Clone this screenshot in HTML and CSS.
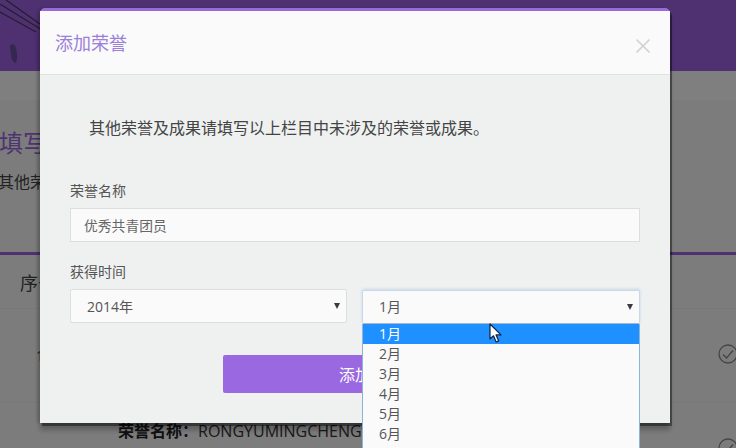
FILE: index.html
```html
<!DOCTYPE html>
<html lang="zh-CN">
<head>
<meta charset="utf-8">
<title>添加荣誉</title>
<link rel="stylesheet" href="styles.css">
</head>
<body>
<div class="page">
  <header class="banner">
    <svg class="banner-art" width="120" height="71" viewBox="0 0 120 71">
      <path d="M0 4L42 30M0 12L36 32M6 0L40 24" stroke="#4a3a5c" stroke-width="1.300" fill="none"/>
      <path d="M10 46c2-3 5-2 6 2s2 10 0 15c-3 0-5-5-5-8z" fill="#6d4ea0"/>
    </svg>
  </header>
  <section class="topband"></section>
  <section class="intro">
    <h2 class="intro-title">填写其他荣誉</h2>
    <p class="intro-text">其他荣誉及成果</p>
  </section>
  <section class="list">
    <div class="list-head">序号</div>
    <div class="row">
      <span class="row-num">1</span>
      <span class="row-text"><b>荣誉名称：</b>RONGYUMINGCHENG</span>
      <svg class="check" width="20" height="20" viewBox="0 0 20 20"><circle cx="10" cy="10" r="9" fill="none" stroke="#888" stroke-width="1.3"/><path d="M5 10.5l3.5 3.5L15 6.500" fill="none" stroke="#888" stroke-width="1.3"/></svg>
    </div>
    <div class="row">
      <span class="row-num row-num-link">2</span>
      <span class="row-text row-text-top"><b>荣誉名称：</b>RONGYUMINGCHENG</span>
      <svg class="check" width="20" height="20" viewBox="0 0 20 20"><circle cx="10" cy="10" r="9" fill="none" stroke="#888" stroke-width="1.3"/><path d="M5 10.5l3.5 3.5L15 6.500" fill="none" stroke="#888" stroke-width="1.3"/></svg>
    </div>
  </section>
</div>

<div class="backdrop"></div>

<div class="modal">
  <div class="modal-header">
    <h3 class="modal-title">添加荣誉</h3>
    <svg class="close" width="14" height="14" viewBox="0 0 14 14"><path d="M.5 .5L13.500 13.500M13.500 .5L.5 13.500" stroke="#d2d3d3" stroke-width="1.6" fill="none"/></svg>
  </div>
  <div class="modal-body">
    <p class="hint">其他荣誉及成果请填写以上栏目中未涉及的荣誉或成果。</p>
    <div class="field">
      <label class="label">荣誉名称</label>
      <div class="input">优秀共青团员</div>
    </div>
    <div class="field field-time">
      <label class="label">获得时间</label>
      <div class="selects">
        <div class="select select-year">2014年<i class="arrow"></i></div>
        <div class="select select-open">1月<i class="arrow"></i>
          <ul class="options">
            <li class="option option-active">1月</li>
            <li class="option">2月</li>
            <li class="option">3月</li>
            <li class="option">4月</li>
            <li class="option">5月</li>
            <li class="option">6月</li>
          </ul>
        </div>
      </div>
    </div>
    <div class="actions">
      <button class="submit">添加</button>
    </div>
  </div>
</div>

<svg class="cursor" width="14" height="21" viewBox="0 0 14 21"><path d="M1 1v15l3.500-3.200 2.600 6.200 2.600-1.100-2.600-6H12z" fill="#fff" stroke="#10233f" stroke-width="1.200" stroke-linejoin="round"/></svg>
</body>
</html>
```
FILE: styles.css
```css
* { box-sizing: border-box; }
html, body { margin: 0; height: 448px; overflow: hidden; }
body {
  position: relative;
  font-family: "Open Sans", "Noto Sans CJK SC", sans-serif;
  font-size: 14px;
  color: #555;
  background: #fff;
}
.page { height: 448px; overflow: hidden; }
.banner { position: relative; height: 71px; background: #9e62e4; overflow: hidden; }
.banner-art { display: block; }
.topband { height: 29px; background: #fff; }
.intro { height: 152px; padding-top: 27px; background: #f8f8f8; }
.intro-title {
  margin: 0 0 0 -1px;
  font-size: 24px;
  line-height: 32px;
  font-weight: 400;
  color: #9a68e0;
  white-space: nowrap;
}
.intro-text { margin: 11px 0 0 -2px; font-size: 16px; line-height: 24px; color: #444; }
.list { border-top: 3px solid #9e62e4; background: #f8f8f8; }
.list-head { height: 53px; padding: 14px 0 0 20px; font-size: 18px; line-height: 28px; color: #444; }
.row {
  display: flex;
  align-items: center;
  height: 94px;
  border-top: 1px solid #f0f0f0;
}
.row-num { width: 118px; padding-left: 36px; font-size: 14px; color: #444; flex: none; }
.row-num-link { color: #9a68e0; padding-top: 76px; }
.row-text { flex: 1; font-size: 16px; color: #333; white-space: nowrap; }
.row-text b { color: #222; }
.row-text-top { align-self: flex-start; padding-top: 15px; }
.check { flex: none; margin: 0 -2px 3px 0; }

.backdrop { position: absolute; inset: 0; background: rgba(0, 0, 0, .5); }

.modal {
  position: absolute;
  left: 40px;
  top: 8px;
  width: 630px;
  height: 415px;
  border-top: 3px solid #9a6ad8;
  border-radius: 5px 5px 0 0;
  background: #eff1f1;
  box-shadow: 2px 3px 0 rgba(0, 0, 0, .4), 0 7px 5px rgba(0, 0, 0, .25), -3px 0 3px rgba(0, 0, 0, .15);
}
.modal-header {
  display: flex;
  align-items: center;
  justify-content: space-between;
  height: 64px;
  padding: 0 20px 0 15px;
  background: #fafafb;
  border-bottom: 1px solid #dfe2e2;
}
.modal-title { margin: 0; font-size: 18px; line-height: 26px; font-weight: 400; color: #9b7fd8; }
.close { display: block; margin: 7px 0 0; }
.modal-body { padding: 41px 30px 0; }
.hint { margin: 0 0 0 19px; font-size: 16px; line-height: 24px; color: #444; }
.field { margin-top: 41px; }
.field-time { margin-top: 20px; }
.label { display: block; font-size: 14px; line-height: 20px; color: #555; margin-bottom: 7px; }
.input {
  height: 34px;
  padding: 0 13px;
  border: 1px solid #dcdfdf;
  background: #fafafb;
  font-size: 13.800px;
  line-height: 34px;
  color: #666;
}
.selects { display: grid; grid-template-columns: 277px 278px; column-gap: 15px; }
.select {
  position: relative;
  height: 34px;
  padding: 0 16px;
  border: 1px solid #dcdfdf;
  border-radius: 2px;
  background: #fafafb;
  font-size: 14px;
  line-height: 33px;
  color: #555;
}
.select-open {
  margin-top: 1px;
  line-height: 31px;
  border-color: #c9d9e6;
  border-bottom-color: #a9b9c4;
  box-shadow: 0 -1px 3px rgba(120, 170, 220, .35);
}
.arrow {
  position: absolute;
  right: 6px;
  top: 13px;
  border-left: 3px solid transparent;
  border-right: 3px solid transparent;
  border-top: 6px solid #3a3a44;
}
.options {
  position: absolute;
  left: -1px;
  right: -1px;
  top: 33px;
  margin: 0;
  padding: 0;
  height: 140px;
  list-style: none;
  background: #fafafb;
  border: 1px solid #8db4d8;
  border-top: 0;
  z-index: 2;
}
.option { height: 20px; padding-left: 16px; font-size: 14px; line-height: 20px; color: #555; }
.option-active { background: #1e90ff; color: #fff; }
.actions { display: flex; justify-content: center; margin-top: 31px; }
.submit {
  width: 264px;
  height: 38px;
  border: 0;
  border-radius: 2px;
  background: #9a68e0;
  color: #fff;
  font: 16px "Open Sans", "Noto Sans CJK SC", sans-serif;
}
.cursor { position: absolute; z-index: 3; left: 489px; top: 323px; }
```
